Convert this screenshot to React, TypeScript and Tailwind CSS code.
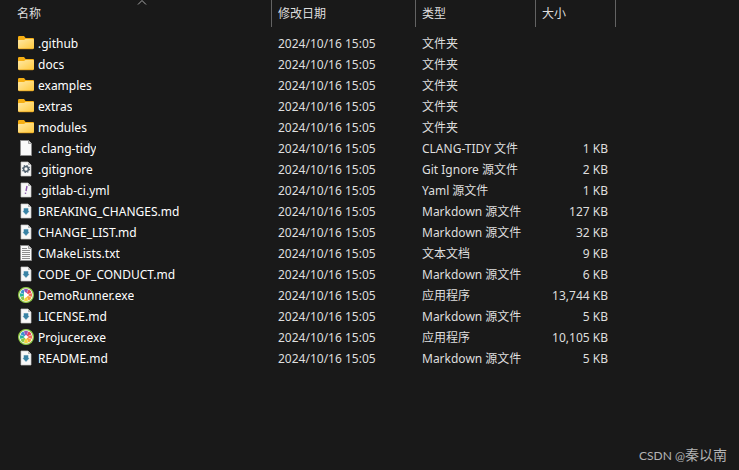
import { useState } from "react";

type Kind = "folder" | "blank" | "gear" | "yaml" | "markdown" | "text" | "runner" | "projucer";

type Entry = {
  name: string;
  kind: Kind;
  type: string;
  size?: number;
};

const MODIFIED = "2024/10/16 15:05";

const entries: Entry[] = [
  { name: ".github", kind: "folder", type: "文件夹" },
  { name: "docs", kind: "folder", type: "文件夹" },
  { name: "examples", kind: "folder", type: "文件夹" },
  { name: "extras", kind: "folder", type: "文件夹" },
  { name: "modules", kind: "folder", type: "文件夹" },
  { name: ".clang-tidy", kind: "blank", type: "CLANG-TIDY 文件", size: 1 },
  { name: ".gitignore", kind: "gear", type: "Git Ignore 源文件", size: 2 },
  { name: ".gitlab-ci.yml", kind: "yaml", type: "Yaml 源文件", size: 1 },
  { name: "BREAKING_CHANGES.md", kind: "markdown", type: "Markdown 源文件", size: 127 },
  { name: "CHANGE_LIST.md", kind: "markdown", type: "Markdown 源文件", size: 32 },
  { name: "CMakeLists.txt", kind: "text", type: "文本文档", size: 9 },
  { name: "CODE_OF_CONDUCT.md", kind: "markdown", type: "Markdown 源文件", size: 6 },
  { name: "DemoRunner.exe", kind: "runner", type: "应用程序", size: 13744 },
  { name: "LICENSE.md", kind: "markdown", type: "Markdown 源文件", size: 5 },
  { name: "Projucer.exe", kind: "projucer", type: "应用程序", size: 10105 },
  { name: "README.md", kind: "markdown", type: "Markdown 源文件", size: 5 },
];

// clockwise, starting at the upper right
const wheelColors = [
  "#e8465a",
  "#f0705a",
  "#f7a23c",
  "#f2d43a",
  "#8cc84b",
  "#27b59a",
  "#3a8fd0",
  "#9a58b5",
];

function FolderIcon() {
  return (
    <svg viewBox="0 0 16 16" className="mb-0.5 size-4 shrink-0" aria-hidden="true">
      <defs>
        <linearGradient id="folder-front" x1="0" y1="0" x2="1" y2="1">
          <stop offset="0" stopColor="#ffe9a6" />
          <stop offset="1" stopColor="#ffc93c" />
        </linearGradient>
      </defs>
      <path d="M0 2.2Q0 1 1.2 1H6l1.6 2H15q1 0 1 1v9H0Z" fill="#f5ae13" />
      <path d="M0 5.6Q0 5 .8 5H6l1.5-1H15q1 0 1 .8V12.8q0 1.2-1.2 1.2H1.2Q0 14 0 12.8Z" fill="url(#folder-front)" />
      <path d="M.3 13.3q.4.5 1 .5h13.4q.6 0 1-.5" fill="none" stroke="#e5a11a" strokeWidth=".7" />
    </svg>
  );
}

function PageIcon({ kind }: { kind: Kind }) {
  const full = kind === "blank" || kind === "text";
  return (
    <svg viewBox="0 0 16 16" className="mb-0.5 size-4 shrink-0" aria-hidden="true">
      {full ? (
        <>
          <path d="M2.5.5h8l3 3v12h-11Z" fill="#fafafa" stroke="#8d8d8d" strokeWidth="1" />
          <path d="M10.5.5v3h3" fill="#d8d8d8" stroke="#8d8d8d" strokeWidth=".8" />
        </>
      ) : (
        <>
          <path d="M3 1h7l3 3v11H3Z" fill="#f8f8f8" stroke="#c9c9c9" strokeWidth=".7" />
          <path d="M10 1v3h3Z" fill="#b5b5b5" />
        </>
      )}
      {kind === "text" && (
        <path d="M4 3.5h5M4 5.5h8M4 7.5h8M4 9.5h8M4 11.5h8M4 13.5h8" stroke="#8d8d8d" strokeWidth="1" />
      )}
      {kind === "gear" && (
        <g fill="none" stroke="#50616f">
          <circle cx="8" cy="8" r="2.4" strokeWidth="1.5" />
          <circle cx="8" cy="8" r="3.5" strokeWidth="1.1" strokeDasharray="1.4 1.35" />
        </g>
      )}
      {kind === "yaml" && (
        <path d="M9 4 8 9M7.6 10.6l-.2 1.2" stroke="#8c55ad" strokeWidth="1.4" />
      )}
      {kind === "markdown" && (
        <path d="M6 5.2l1 .7 1-.9 1 .9 1-.7v3.1h1L8 11.5 5 8.3h1Z" fill="#3983a5" stroke="#3983a5" strokeWidth=".5" />
      )}
    </svg>
  );
}

function WheelIcon({ play }: { play: boolean }) {
  return (
    <svg viewBox="0 0 16 16" className="mb-0.5 size-4 shrink-0" aria-hidden="true">
      <circle cx="8" cy="8" r="7.4" fill="#fff" stroke="#8cc63f" strokeWidth="1.2" />
      {wheelColors.map((color, i) => (
        <path
          key={color}
          d="M7.4 6.4 5.9 2.4Q8 1.2 10.1 2.4L8.6 6.4Z"
          fill={color}
          transform={`rotate(${i * 45 + 45} 8 8)`}
        />
      ))}
      {play ? (
        <path d="M6 4.3 11.3 8 6 11.7Z" fill="#fff" />
      ) : (
        <circle cx="8" cy="8" r="1.4" fill="#fff" />
      )}
    </svg>
  );
}

function EntryIcon({ kind }: { kind: Kind }) {
  if (kind === "folder") return <FolderIcon />;
  if (kind === "runner" || kind === "projucer") return <WheelIcon play={kind === "runner"} />;
  return <PageIcon kind={kind} />;
}

export default function App() {
  const [descending, setDescending] = useState(false);
  const rows = descending ? [...entries].reverse() : entries;

  const headCell = "h-[27px] border-r border-[#636363] p-0 text-left font-normal";
  const headButton = "block h-[27px] w-full cursor-default pl-1.5 text-left";

  return (
    <div className="flex min-h-screen flex-col justify-between bg-[#191919] font-['Noto_Sans','Noto_Sans_CJK_SC',sans-serif] text-xs text-[#dedede]">
      <table className="w-full table-fixed border-separate border-spacing-0">
        <colgroup>
          <col className="w-[272px]" />
          <col className="w-36" />
          <col className="w-30" />
          <col className="w-20" />
          <col />
        </colgroup>
        <thead>
          <tr>
            <th scope="col" aria-sort={descending ? "descending" : "ascending"} className={headCell}>
              <button
                type="button"
                onClick={() => setDescending(!descending)}
                className="relative block h-[27px] w-full cursor-default pl-[17px] text-left"
              >
                名称
                <svg
                  viewBox="0 0 10 5"
                  className={`absolute top-0 left-[137px] h-[5px] w-2.5 ${descending ? "rotate-180" : ""}`}
                  aria-hidden="true"
                >
                  <path d="M1 4.5 5 .5l4 4" fill="none" stroke="#a8a8a8" />
                </svg>
              </button>
            </th>
            <th scope="col" className={headCell}>
              <button type="button" className={headButton}>修改日期</button>
            </th>
            <th scope="col" className={headCell}>
              <button type="button" className={headButton}>类型</button>
            </th>
            <th scope="col" className={headCell}>
              <button type="button" className={headButton}>大小</button>
            </th>
            <td />
          </tr>
        </thead>
        <tbody className="before:block before:h-1.5 before:content-['']">
          {rows.map((entry) => (
            <tr key={entry.name} className="hover:bg-[#2d2d2d]">
              <td className="h-[21px] p-0 pl-[18px] text-white">
                <div className="flex items-center gap-1">
                  <EntryIcon kind={entry.kind} />
                  <span className="truncate">{entry.name}</span>
                </div>
              </td>
              <td className="p-0 pl-1.5 whitespace-nowrap">{MODIFIED}</td>
              <td className="p-0 pl-1.5 whitespace-nowrap">{entry.type}</td>
              <td className="p-0 pr-2 text-right whitespace-nowrap">
                {entry.size !== undefined && `${entry.size.toLocaleString("en-US")} KB`}
              </td>
              <td />
            </tr>
          ))}
        </tbody>
      </table>
      <p className="pr-3 pb-1 text-right font-['Lato','Noto_Sans_CJK_SC',sans-serif] text-xs leading-5 text-[#b4b4b4]">
        CSDN @<span className="text-sm leading-5">秦以南</span>
      </p>
    </div>
  );
}
